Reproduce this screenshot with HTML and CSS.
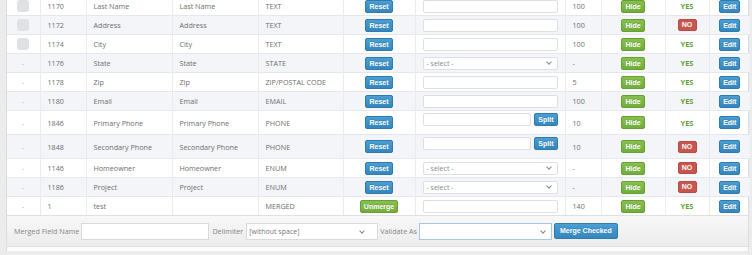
FILE: index.html
```html
<!DOCTYPE html>
<html>
<head>
  <title>Fields</title>
  <link rel="stylesheet" href="styles.css">
</head>
<body>
  <div class="page">
    <div class="panel">
      <table class="fields">
        <colgroup>
          <col style="width:33px"><col style="width:46px"><col style="width:86px"><col style="width:86px">
          <col style="width:85px"><col style="width:72px"><col style="width:150px"><col style="width:36px">
          <col style="width:64px"><col style="width:44px"><col style="width:41px">
        </colgroup>
        <tr>
          <td class="c"><span class="check"></span></td><td>1170</td><td>Last Name</td><td>Last Name</td><td>TEXT</td>
          <td class="c"><span class="btn blue">Reset</span></td><td><span class="inp"></span></td><td>100</td>
          <td class="c"><span class="btn green">Hide</span></td><td class="c"><span class="yes">YES</span></td><td class="c"><span class="btn blue">Edit</span></td>
        </tr>
        <tr>
          <td class="c"><span class="check"></span></td><td>1172</td><td>Address</td><td>Address</td><td>TEXT</td>
          <td class="c"><span class="btn blue">Reset</span></td><td><span class="inp"></span></td><td>100</td>
          <td class="c"><span class="btn green">Hide</span></td><td class="c"><span class="no">NO</span></td><td class="c"><span class="btn blue">Edit</span></td>
        </tr>
        <tr>
          <td class="c"><span class="check"></span></td><td>1174</td><td>City</td><td>City</td><td>TEXT</td>
          <td class="c"><span class="btn blue">Reset</span></td><td><span class="inp"></span></td><td>100</td>
          <td class="c"><span class="btn green">Hide</span></td><td class="c"><span class="yes">YES</span></td><td class="c"><span class="btn blue">Edit</span></td>
        </tr>
        <tr>
          <td class="c dash">-</td><td>1176</td><td>State</td><td>State</td><td>STATE</td>
          <td class="c"><span class="btn blue">Reset</span></td><td><span class="inp sel">- select -<i class="chev"></i></span></td><td>-</td>
          <td class="c"><span class="btn green">Hide</span></td><td class="c"><span class="yes">YES</span></td><td class="c"><span class="btn blue">Edit</span></td>
        </tr>
        <tr>
          <td class="c dash">-</td><td>1178</td><td>Zip</td><td>Zip</td><td>ZIP/POSTAL CODE</td>
          <td class="c"><span class="btn blue">Reset</span></td><td><span class="inp"></span></td><td>5</td>
          <td class="c"><span class="btn green">Hide</span></td><td class="c"><span class="yes">YES</span></td><td class="c"><span class="btn blue">Edit</span></td>
        </tr>
        <tr>
          <td class="c dash">-</td><td>1180</td><td>Email</td><td>Email</td><td>EMAIL</td>
          <td class="c"><span class="btn blue">Reset</span></td><td><span class="inp"></span></td><td>100</td>
          <td class="c"><span class="btn green">Hide</span></td><td class="c"><span class="yes">YES</span></td><td class="c"><span class="btn blue">Edit</span></td>
        </tr>
        <tr class="tall">
          <td class="c dash">-</td><td>1846</td><td>Primary Phone</td><td>Primary Phone</td><td>PHONE</td>
          <td class="c"><span class="btn blue">Reset</span></td><td class="top"><div class="split"><span class="inp short"></span><span class="btn blue">Split</span></div></td><td>10</td>
          <td class="c"><span class="btn green">Hide</span></td><td class="c"><span class="yes">YES</span></td><td class="c"><span class="btn blue">Edit</span></td>
        </tr>
        <tr class="tall">
          <td class="c dash">-</td><td>1848</td><td>Secondary Phone</td><td>Secondary Phone</td><td>PHONE</td>
          <td class="c"><span class="btn blue">Reset</span></td><td class="top"><div class="split"><span class="inp short"></span><span class="btn blue">Split</span></div></td><td>10</td>
          <td class="c"><span class="btn green">Hide</span></td><td class="c"><span class="no">NO</span></td><td class="c"><span class="btn blue">Edit</span></td>
        </tr>
        <tr>
          <td class="c dash">-</td><td>1146</td><td>Homeowner</td><td>Homeowner</td><td>ENUM</td>
          <td class="c"><span class="btn blue">Reset</span></td><td><span class="inp sel">- select -<i class="chev"></i></span></td><td>-</td>
          <td class="c"><span class="btn green">Hide</span></td><td class="c"><span class="no">NO</span></td><td class="c"><span class="btn blue">Edit</span></td>
        </tr>
        <tr>
          <td class="c dash">-</td><td>1186</td><td>Project</td><td>Project</td><td>ENUM</td>
          <td class="c"><span class="btn blue">Reset</span></td><td><span class="inp sel">- select -<i class="chev"></i></span></td><td>-</td>
          <td class="c"><span class="btn green">Hide</span></td><td class="c"><span class="no">NO</span></td><td class="c"><span class="btn blue">Edit</span></td>
        </tr>
        <tr>
          <td class="c dash">-</td><td>1</td><td>test</td><td></td><td>MERGED</td>
          <td class="c"><span class="btn green">Unmerge</span></td><td><span class="inp"></span></td><td>140</td>
          <td class="c"><span class="btn green">Hide</span></td><td class="c"><span class="yes">YES</span></td><td class="c"><span class="btn blue">Edit</span></td>
        </tr>
      </table>

      <div class="merge-bar">
        <span class="lbl">Merged Field Name</span>
        <span class="box name"></span>
        <span class="lbl">Delimiter</span>
        <span class="box delim">[without space]<i class="chev"></i></span>
        <span class="lbl">Validate As</span>
        <span class="box validate"><i class="chev"></i></span>
        <span class="btn blue big">Merge Checked</span>
      </div>
      <div class="panel-foot"></div>
    </div>
  </div>
</body>
</html>
```

FILE: styles.css
```css
body {
  margin: 0;
  background-color: #ececec;
  font-family: "Open Sans", sans-serif;
  font-size: 7.2px;
  color: #6e6e6e;
  overflow: hidden;
}

.page {
  padding-left: 6px;
  height: 255px;
}

.panel {
  width: 743px;
  background-color: #fff;
  border-left: 1px solid #dcdcdc;
  border-right: 1px solid #dcdcdc;
  margin-top: -4px;
  box-sizing: border-box;
}

.fields {
  border-collapse: collapse;
  table-layout: fixed;
  width: 741px;
}

.fields td {
  height: 18px;
  padding: 0 7px;
  border-top: 1px solid #e4e7eb;
  border-left: 1px solid #e9ecef;
  white-space: nowrap;
  vertical-align: middle;
}

.fields td:first-child {
  border-left: none;
}

.fields tr:nth-child(even) td {
  background-color: #f3f5f8;
}

.fields tr.tall td {
  height: 23px;
}

.fields td.c {
  text-align: center;
  padding: 0;
}

.fields td.top {
  vertical-align: top;
}

.dash {
  color: #b0b0b0;
}

.check {
  display: inline-block;
  width: 12px;
  height: 12px;
  border-radius: 3px;
  background-color: #dfe1e5;
  vertical-align: middle;
}

.btn {
  display: inline-block;
  font-family: "Liberation Sans", Arial, sans-serif;
  font-weight: bold;
  font-size: 7px;
  color: #fff;
  line-height: 11px;
  padding: 0 3px;
  border-radius: 2px;
  vertical-align: middle;
  text-shadow: 0 -1px 0 rgba(0, 0, 0, 0.15);
}

.blue {
  background: linear-gradient(#4a9fd3, #3586bd);
  border: 1px solid #2f7bb0;
}

.green {
  background: linear-gradient(#87c04f, #72ad3b);
  border: 1px solid #68a034;
}

.yes {
  font-weight: bold;
  color: #5e9e3a;
  font-size: 7.4px;
}

.no {
  display: inline-block;
  font-family: "Liberation Sans", Arial, sans-serif;
  font-weight: bold;
  font-size: 7px;
  color: #fff;
  line-height: 10px;
  width: 17px;
  background-color: #c9554f;
  border: 1px solid #b94a44;
  border-radius: 2px;
  vertical-align: middle;
}

.inp {
  display: block;
  position: relative;
  height: 11px;
  border: 1px solid #dcdfe3;
  border-radius: 2px;
  background-color: #fff;
  line-height: 11px;
  padding-left: 3px;
  font-size: 7px;
  color: #8a8a8a;
}

.inp.short {
  width: 109px;
}

.split {
  display: flex;
  align-items: flex-start;
  gap: 3px;
  margin-top: 2px;
}

.chev {
  position: absolute;
  right: 6px;
  top: 2px;
  width: 3px;
  height: 3px;
  border-right: 1px solid #888;
  border-bottom: 1px solid #888;
  transform: rotate(45deg);
}

.merge-bar {
  display: flex;
  align-items: center;
  height: 32px;
  padding: 0 7px;
  border-top: 1px solid #e0e0e0;
  background: linear-gradient(#f8f8f8, #ececec);
  border-bottom: 1px solid #dedede;
  box-sizing: border-box;
}

.lbl {
  color: #858585;
  font-size: 7.2px;
}

.box {
  display: block;
  position: relative;
  height: 17px;
  border: 1px solid #dadada;
  background-color: #fff;
  box-sizing: border-box;
  font-size: 7px;
  line-height: 15px;
  color: #777;
}

.box .chev {
  top: 5px;
}

.box.name {
  width: 128px;
  margin: 0 3px 0 2px;
}

.box.delim {
  width: 132px;
  margin: 0 2px 0 3px;
  padding-left: 2px;
}

.box.delim .chev {
  right: 13px;
}

.box.validate {
  width: 133px;
  border-color: #a9c7e0;
  margin-left: 2px;
}

.btn.big {
  line-height: 14px;
  padding: 0 5px;
  margin-left: 2px;
}

.panel-foot {
  height: 16px;
  background-color: #fbfbfb;
}
```
